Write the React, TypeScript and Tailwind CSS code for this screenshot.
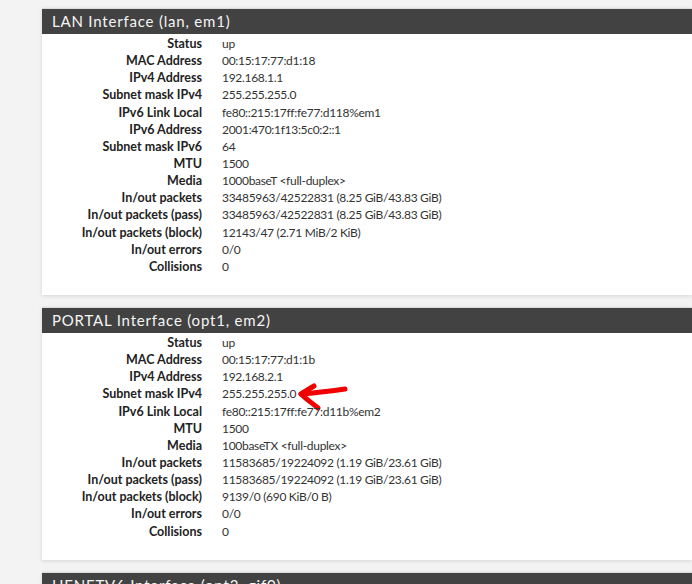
import React from "react";

type Row = [string, string];

const lan: Row[] = [
  ["Status", "up"],
  ["MAC Address", "00:15:17:77:d1:18"],
  ["IPv4 Address", "192.168.1.1"],
  ["Subnet mask IPv4", "255.255.255.0"],
  ["IPv6 Link Local", "fe80::215:17ff:fe77:d118%em1"],
  ["IPv6 Address", "2001:470:1f13:5c0:2::1"],
  ["Subnet mask IPv6", "64"],
  ["MTU", "1500"],
  ["Media", "1000baseT <full-duplex>"],
  ["In/out packets", "33485963/42522831 (8.25 GiB/43.83 GiB)"],
  ["In/out packets (pass)", "33485963/42522831 (8.25 GiB/43.83 GiB)"],
  ["In/out packets (block)", "12143/47 (2.71 MiB/2 KiB)"],
  ["In/out errors", "0/0"],
  ["Collisions", "0"],
];

const portal: Row[] = [
  ["Status", "up"],
  ["MAC Address", "00:15:17:77:d1:1b"],
  ["IPv4 Address", "192.168.2.1"],
  ["Subnet mask IPv4", "255.255.255.0"],
  ["IPv6 Link Local", "fe80::215:17ff:fe77:d11b%em2"],
  ["MTU", "1500"],
  ["Media", "100baseTX <full-duplex>"],
  ["In/out packets", "11583685/19224092 (1.19 GiB/23.61 GiB)"],
  ["In/out packets (pass)", "11583685/19224092 (1.19 GiB/23.61 GiB)"],
  ["In/out packets (block)", "9139/0 (690 KiB/0 B)"],
  ["In/out errors", "0/0"],
  ["Collisions", "0"],
];

function Arrow() {
  return (
    <svg
      className="absolute left-[91px] top-[-4px] pointer-events-none"
      width="60"
      height="34"
      viewBox="0 0 60 34"
      fill="none"
    >
      <path
        d="M8 13 C 22 12, 38 10, 52 8"
        stroke="#f00000"
        strokeWidth="5"
        strokeLinecap="round"
      />
      <path
        d="M21 5 C 16 8, 11 11, 8 13 C 13 18, 19 22, 25 27"
        stroke="#f00000"
        strokeWidth="5"
        strokeLinecap="round"
        strokeLinejoin="round"
      />
    </svg>
  );
}

function Panel({
  title,
  rows,
  arrowRow,
}: {
  title: string;
  rows: Row[];
  arrowRow?: number;
}) {
  return (
    <div className="bg-white shadow-[0_1px_4px_rgba(0,0,0,0.12)]">
      <div className="h-[26px] bg-[#424242] border-t border-[#dcdcdc] pl-[10px] flex items-center text-[15px] tracking-[0.8px] text-[#f5f5f5] font-['Lato',sans-serif]">
        {title}
      </div>
      <div className="pt-[1px] pb-[20px]">
        {rows.map(([k, v], i) => (
          <div key={i} className="flex h-[17.15px] items-center leading-[17px] font-['Lato',sans-serif]">
            <div className="w-[160px] shrink-0 text-right text-[12.5px] font-bold text-[#222] whitespace-nowrap">
              {k}
            </div>
            <div className="pl-[20px] text-[12px] tracking-[-0.3px] text-[#333] whitespace-nowrap relative">
              {v}
              {arrowRow === i && <Arrow />}
            </div>
          </div>
        ))}
      </div>
    </div>
  );
}

export default function App() {
  return (
    <div className="w-[692px] h-[584px] overflow-hidden bg-[#f3f3f3]">
      <div className="pl-[42px] pt-[8px] flex flex-col gap-[12px]">
        <Panel title="LAN Interface (lan, em1)" rows={lan} />
        <Panel title="PORTAL Interface (opt1, em2)" rows={portal} arrowRow={3} />
        <Panel title="HENETV6 Interface (opt2, gif0)" rows={[]} />
      </div>
    </div>
  );
}
